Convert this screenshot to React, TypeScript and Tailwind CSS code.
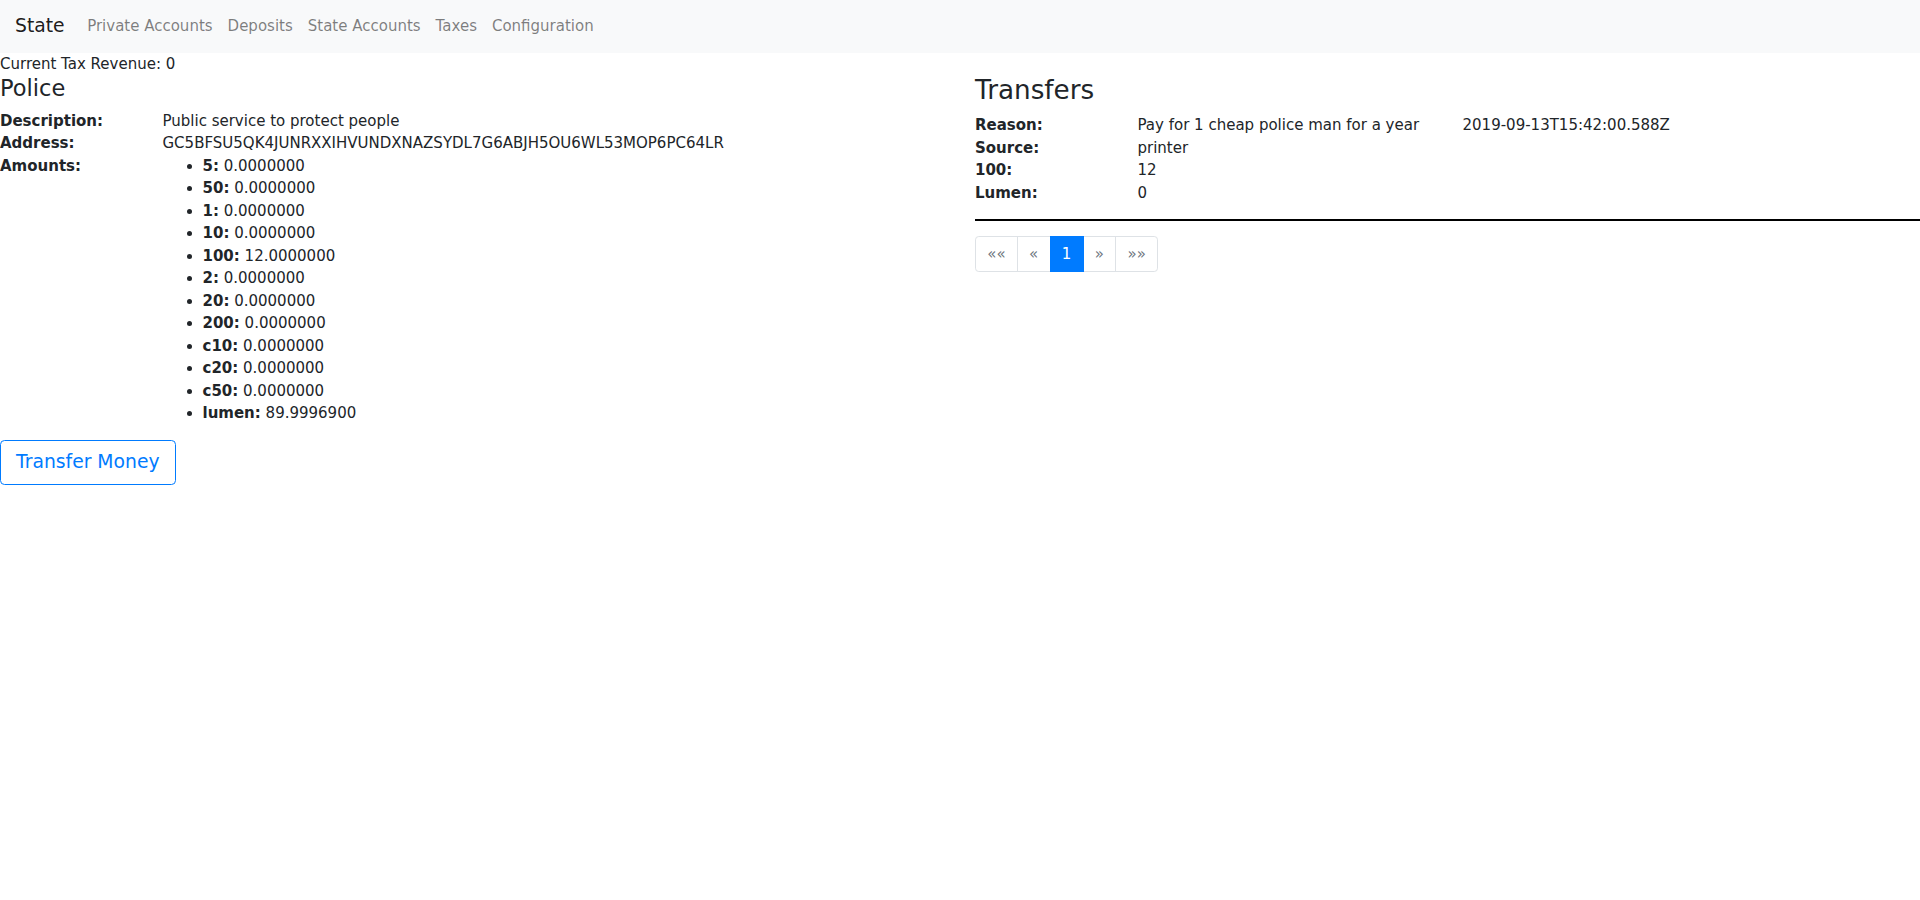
import React from "react";

const amounts: [string, string][] = [
  ["5", "0.0000000"],
  ["50", "0.0000000"],
  ["1", "0.0000000"],
  ["10", "0.0000000"],
  ["100", "12.0000000"],
  ["2", "0.0000000"],
  ["20", "0.0000000"],
  ["200", "0.0000000"],
  ["c10", "0.0000000"],
  ["c20", "0.0000000"],
  ["c50", "0.0000000"],
  ["lumen", "89.9996900"],
];

export default function App() {
  return (
    <div className="font-['DejaVu_Sans',sans-serif] text-[15px] leading-[1.5] text-[#212529] bg-white min-h-screen">
      <nav className="flex items-center bg-[#f8f9fa] px-[15px] py-[7.5px]">
        <span className="text-[18.75px] leading-[1.5] py-[4.6875px] mr-[15px] text-black/90">State</span>
        {["Private Accounts", "Deposits", "State Accounts", "Taxes", "Configuration"].map((l) => (
          <span key={l} className="px-[7.5px] py-[7.5px] text-black/50">
            {l}
          </span>
        ))}
      </nav>
      <div>Current Tax Revenue: 0</div>
      <div className="flex">
        <div className="w-1/2 pr-[15px]">
          <h4 className="text-[22.5px] leading-[1.2] mb-[7.5px] font-normal">Police</h4>
          <div className="flex">
            <div className="w-[162.5px] shrink-0 font-bold">Description:</div>
            <div>Public service to protect people</div>
          </div>
          <div className="flex">
            <div className="w-[162.5px] shrink-0 font-bold">Address:</div>
            <div>GC5BFSU5QK4JUNRXXIHVUNDXNAZSYDL7G6ABJH5OU6WL53MOP6PC64LR</div>
          </div>
          <div className="flex">
            <div className="w-[162.5px] shrink-0 font-bold">Amounts:</div>
            <ul className="list-disc pl-10 mb-[15px]">
              {amounts.map(([k, v]) => (
                <li key={k}>
                  <b className="font-bold">{k}:</b> {v}
                </li>
              ))}
            </ul>
          </div>
          <button className="border border-[#007bff] text-[#007bff] rounded-[4.5px] px-[15px] py-[7.5px] text-[18.75px] leading-[1.5] bg-transparent">
            Transfer Money
          </button>
        </div>
        <div className="w-1/2 pl-[15px]">
          <h3 className="text-[26.25px] leading-[1.2] mb-[7.5px] font-normal">Transfers</h3>
          <div className="flex">
            <div className="w-[162.5px] shrink-0 font-bold">Reason:</div>
            <div className="w-[325px] shrink-0">Pay for 1 cheap police man for a year</div>
            <div>2019-09-13T15:42:00.588Z</div>
          </div>
          <div className="flex">
            <div className="w-[162.5px] shrink-0 font-bold">Source:</div>
            <div>printer</div>
          </div>
          <div className="flex">
            <div className="w-[162.5px] shrink-0 font-bold">100:</div>
            <div>12</div>
          </div>
          <div className="flex">
            <div className="w-[162.5px] shrink-0 font-bold">Lumen:</div>
            <div>0</div>
          </div>
          <hr className="mt-[15px] mb-[15px] border-0 border-t-2 border-black" />
          <div className="flex">
            <span className="border border-[#dee2e6] rounded-l-[3.75px] px-[11.25px] py-[7.5px] leading-[1.25] text-[#6c757d]">««</span>
            <span className="-ml-px border border-[#dee2e6] px-[11.25px] py-[7.5px] leading-[1.25] text-[#6c757d]">«</span>
            <span className="-ml-px relative z-10 border border-[#007bff] bg-[#007bff] px-[11.25px] py-[7.5px] leading-[1.25] text-white">1</span>
            <span className="-ml-px border border-[#dee2e6] px-[11.25px] py-[7.5px] leading-[1.25] text-[#6c757d]">»</span>
            <span className="-ml-px border border-[#dee2e6] rounded-r-[3.75px] px-[11.25px] py-[7.5px] leading-[1.25] text-[#6c757d]">»»</span>
          </div>
        </div>
      </div>
    </div>
  );
}
